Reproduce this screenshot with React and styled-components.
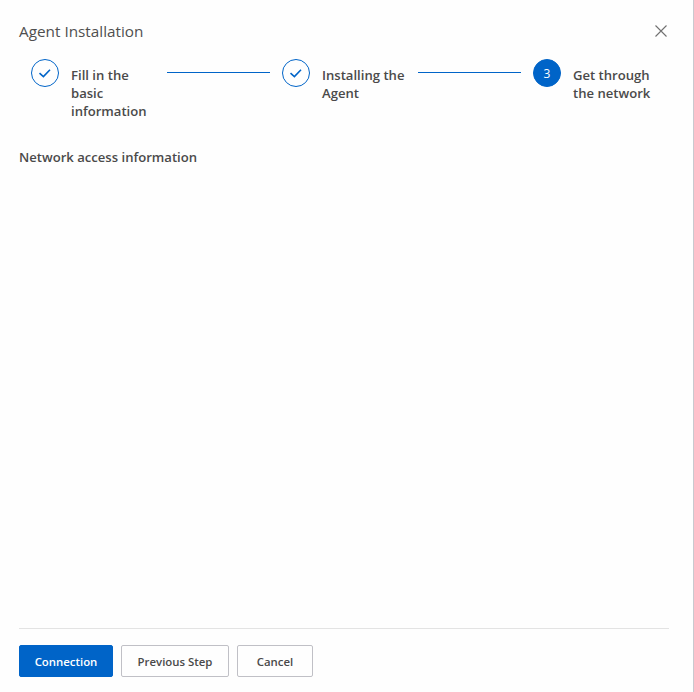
import React from "react";
import styled, { createGlobalStyle } from "styled-components";

const Global = createGlobalStyle`
  html, body { margin: 0; padding: 0; background: #fefefe; }
  * { box-sizing: border-box; }
`;

const Dialog = styled.div`
  width: 694px;
  height: 692px;
  padding: 0 24px 0 19px;
  display: flex;
  flex-direction: column;
  background: #fefefe;
  border-right: 1px solid #c9c9cf;
  font-family: "Open Sans", "Noto Sans", "Liberation Sans", sans-serif;
  color: #4a4a4a;
`;

const Header = styled.div`
  height: 59px;
  padding-top: 20px;
  display: flex;
  justify-content: space-between;
  align-items: flex-start;
`;

const Title = styled.div`
  font-size: 15.3px;
  line-height: 23px;
  color: #4f4f4f;
`;

const Close = styled.svg`
  width: 12px;
  height: 12px;
  margin: 5px 2px 0 0;
  stroke: #707070;
  stroke-width: 1.1;
  fill: none;
`;

const Steps = styled.div`
  display: flex;
  padding-left: 12px;
`;

const Step = styled.div`
  display: flex;
  width: ${(p) => (p.$last ? "auto" : "251px")};
`;

const Circle = styled.div`
  flex: none;
  width: 28px;
  height: 28px;
  border-radius: 50%;
  display: flex;
  align-items: center;
  justify-content: center;
  border: 1px solid #0064c8;
  background: ${(p) => (p.$active ? "#0064c8" : "transparent")};
  color: #fff;
  font-size: 12px;
`;

const Label = styled.div`
  margin-left: 12px;
  width: ${(p) => p.$w}px;
  flex: none;
  padding-top: 7px;
  font-size: 13.1px;
  font-weight: 600;
  line-height: 18px;
  color: #4a4a4a;
`;

const Connector = styled.div`
  flex: none;
  width: 103px;
  height: 1px;
  margin: 13px 0 0 ${(p) => p.$gap}px;
  background: #0064c8;
`;

const Section = styled.div`
  margin-top: 28px;
  flex: 1;
  font-size: 13.1px;
  font-weight: 600;
  line-height: 18px;
  color: #4a4a4a;
`;

const Footer = styled.div`
  border-top: 1px solid #e3e3e3;
  height: 64px;
  padding-top: 16px;
  display: flex;
  gap: 8px;
`;

const Button = styled.button`
  height: 32px;
  width: ${(p) => p.$w}px;
  padding: 0;
  border-radius: 2px;
  border: 1px solid ${(p) => (p.$primary ? "#0064c8" : "#c0c0c6")};
  background: ${(p) => (p.$primary ? "#0064c8" : "#fefefe")};
  color: ${(p) => (p.$primary ? "#fff" : "#4a4a4a")};
  font-family: inherit;
  font-size: 11.4px;
  font-weight: 600;
`;

const Check = () => (
  <svg width="14" height="14" viewBox="0 0 14 14" fill="none" stroke="#0064c8" strokeWidth="1.6">
    <path d="M1.5 7.2 L5.4 10.6 L12 3.8" />
  </svg>
);

export default function App() {
  return (
    <Dialog>
      <Global />
      <Header>
        <Title>Agent Installation</Title>
        <Close viewBox="0 0 12 12"><path d="M.5.5l11 11M11.5.5l-11 11" /></Close>
      </Header>
      <Steps>
        <Step>
          <Circle><Check /></Circle>
          <Label $w={84}>Fill in the basic information</Label>
          <Connector $gap={12} />
        </Step>
        <Step>
          <Circle><Check /></Circle>
          <Label $w={84}>Installing the Agent</Label>
          <Connector $gap={12} />
        </Step>
        <Step $last>
          <Circle $active>3</Circle>
          <Label $w={84}>Get through the network</Label>
        </Step>
      </Steps>
      <Section>Network access information</Section>
      <Footer>
        <Button $primary $w={94}>Connection</Button>
        <Button $w={108}>Previous Step</Button>
        <Button $w={76}>Cancel</Button>
      </Footer>
    </Dialog>
  );
}
